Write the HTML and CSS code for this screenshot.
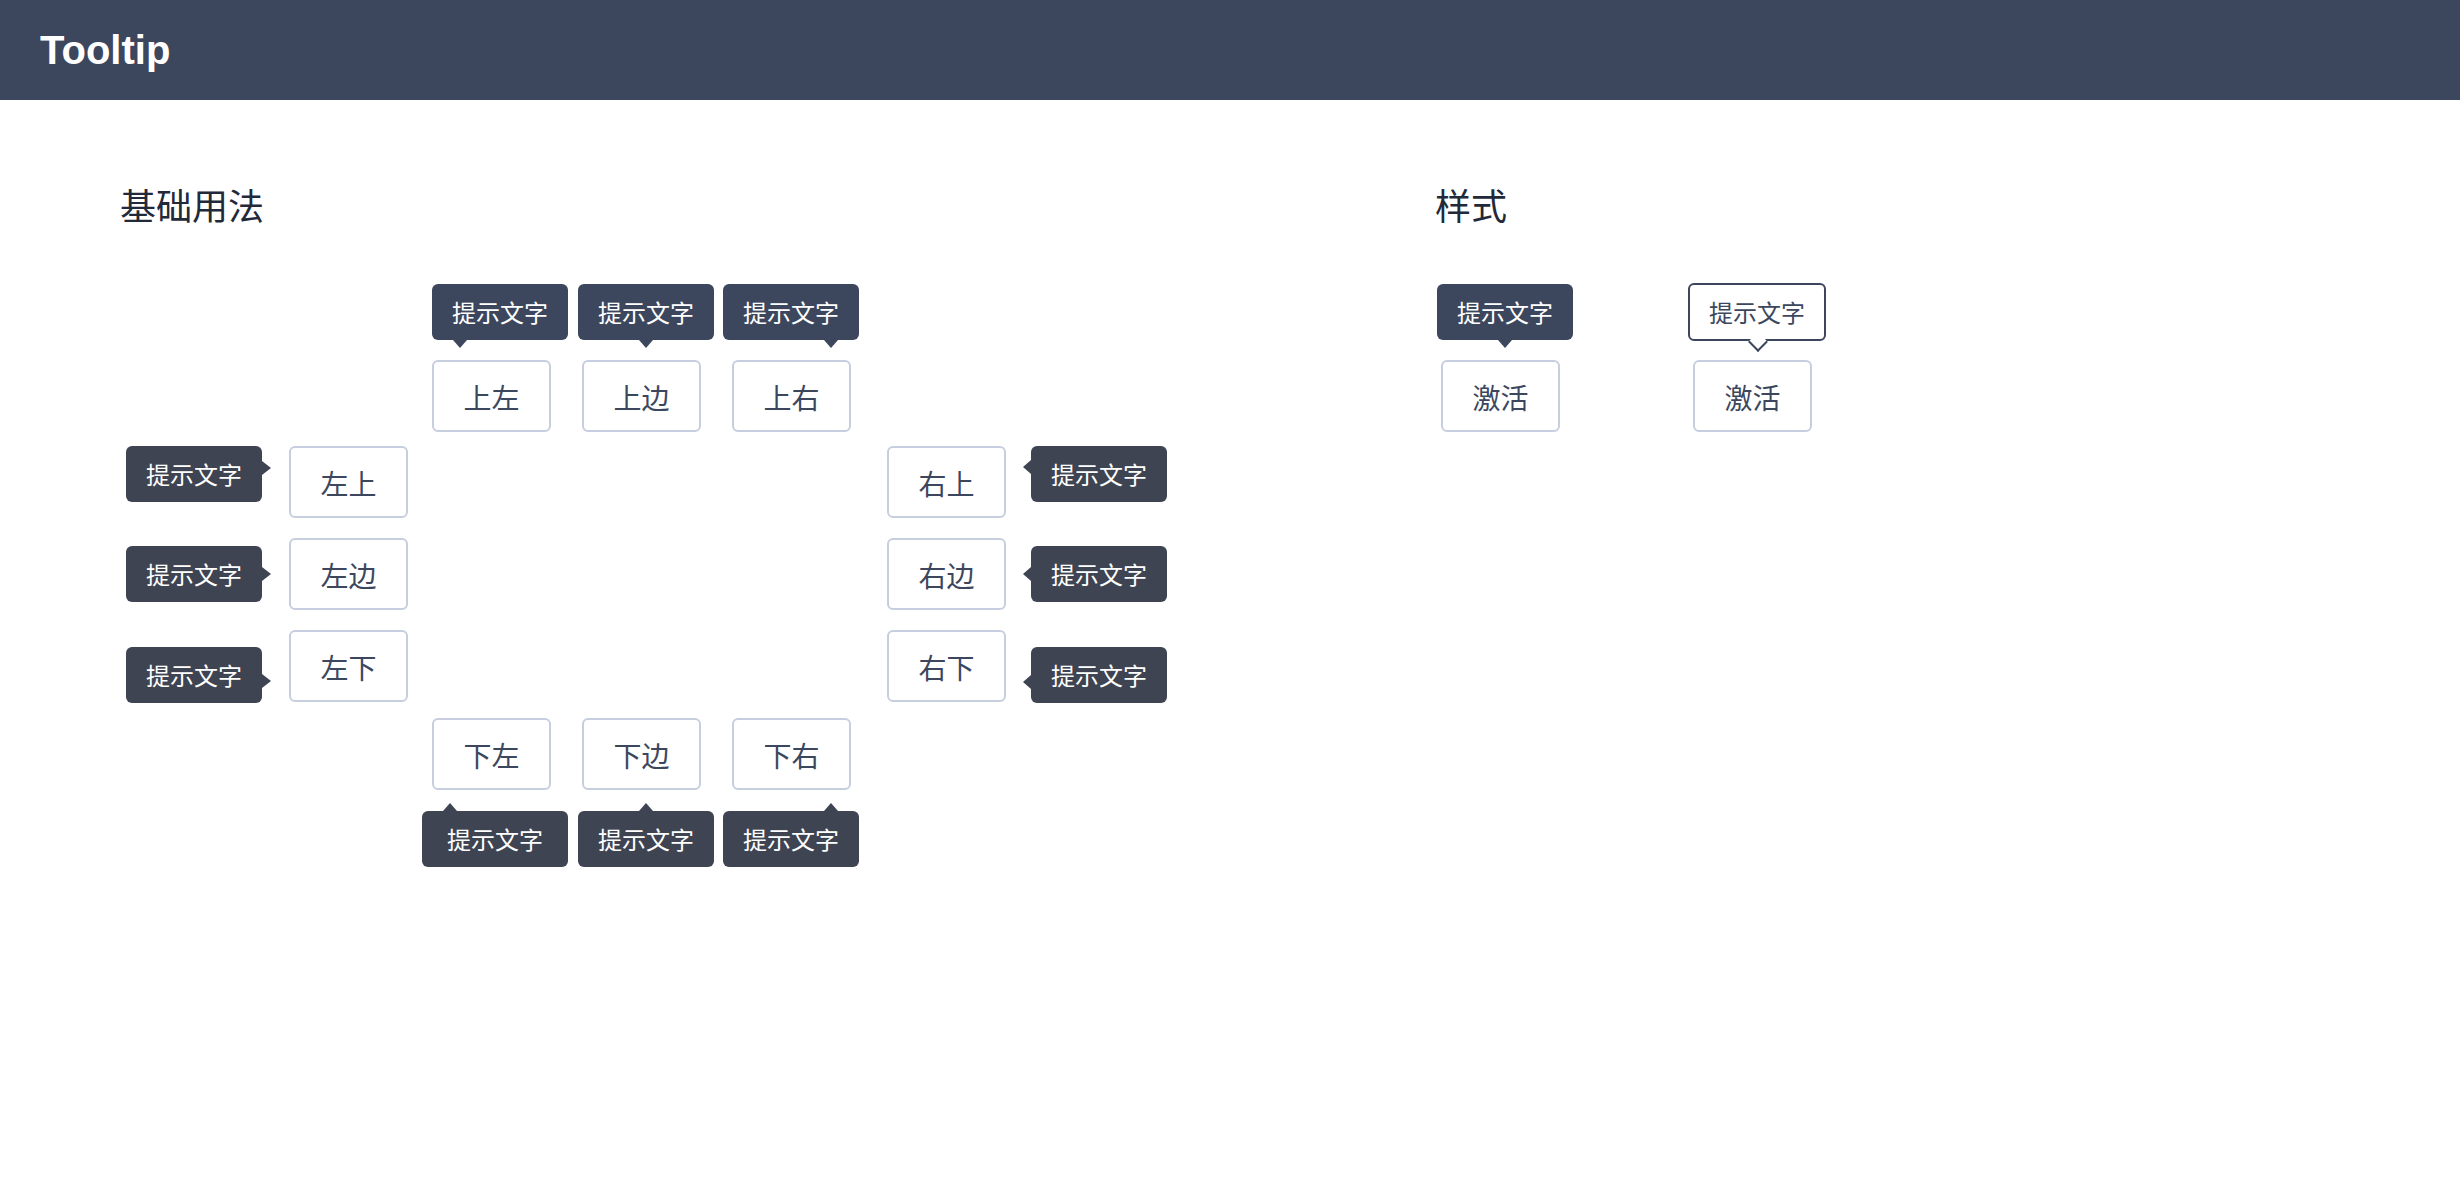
FILE: index.html
```html
<!DOCTYPE html>
<html lang="zh-CN">
<head>
<meta charset="utf-8">
<title>Tooltip</title>
<link rel="stylesheet" href="styles.css">
</head>
<body>
<header class="header"><h1 class="header-title">Tooltip</h1></header>
<main class="page">
  <section class="sec sec-basic">
    <h2 class="sec-title">基础用法</h2>
    <div class="placement">
      <div class="anchor r1 c2"><button class="btn">上左</button><div class="tip tip-top tip-start">提示文字</div></div>
      <div class="anchor r1 c3"><button class="btn">上边</button><div class="tip tip-top tip-center">提示文字</div></div>
      <div class="anchor r1 c4"><button class="btn">上右</button><div class="tip tip-top tip-end">提示文字</div></div>

      <div class="anchor r2 c1"><button class="btn">左上</button><div class="tip tip-left tip-start">提示文字</div></div>
      <div class="anchor r2 c5"><button class="btn">右上</button><div class="tip tip-right tip-start">提示文字</div></div>
      <div class="anchor r3 c1"><button class="btn">左边</button><div class="tip tip-left tip-center">提示文字</div></div>
      <div class="anchor r3 c5"><button class="btn">右边</button><div class="tip tip-right tip-center">提示文字</div></div>
      <div class="anchor r4 c1"><button class="btn">左下</button><div class="tip tip-left tip-end">提示文字</div></div>
      <div class="anchor r4 c5"><button class="btn">右下</button><div class="tip tip-right tip-end">提示文字</div></div>

      <div class="anchor r5 c2"><button class="btn">下左</button><div class="tip tip-bottom tip-start tip-wide">提示文字</div></div>
      <div class="anchor r5 c3"><button class="btn">下边</button><div class="tip tip-bottom tip-center">提示文字</div></div>
      <div class="anchor r5 c4"><button class="btn">下右</button><div class="tip tip-bottom tip-end">提示文字</div></div>
    </div>
  </section>
  <section class="sec sec-style">
    <h2 class="sec-title">样式</h2>
    <div class="style-row">
      <div class="anchor"><button class="btn">激活</button><div class="tip tip-top tip-center">提示文字</div></div>
      <div class="anchor"><button class="btn">激活</button><div class="tip tip-light">提示文字</div></div>
    </div>
  </section>
</main>
</body>
</html>
```
FILE: styles.css
```css
* { box-sizing: border-box; }

html, body { background: #ffffff; }

body {
  margin: 0;
  min-height: 100vh;
  font-family: "Noto Sans CJK SC", "Noto Sans", sans-serif;
}

.header {
  height: 100px;
  background: #3c475e;
  padding-left: 40px;
}

.header-title {
  margin: 0;
  font: bold 40px/100px "Liberation Sans", Arial, sans-serif;
  color: #ffffff;
}

.page {
  display: flex;
  padding: 86px 0 200px 120px;
}

.sec-basic { width: 1315px; }

.sec-title {
  margin: 0;
  font-size: 36px;
  line-height: 36px;
  font-weight: 400;
  color: #222938;
}

.placement {
  display: grid;
  grid-template-columns: 143px 150px 150px 155px 120px;
  grid-template-rows: 86px 92px 92px 88px 72px;
  margin: 138px 0 0 169px;
  padding-bottom: 100px;
}

.r1 { grid-row: 1; }
.r2 { grid-row: 2; }
.r3 { grid-row: 3; }
.r4 { grid-row: 4; }
.r5 { grid-row: 5; }
.c1 { grid-column: 1; }
.c2 { grid-column: 2; }
.c3 { grid-column: 3; }
.c4 { grid-column: 4; }
.c5 { grid-column: 5; }

.anchor {
  position: relative;
  width: 119px;
  height: 72px;
}

.btn {
  display: block;
  width: 100%;
  height: 100%;
  padding: 2px 0 0;
  border: 2px solid #c6cedf;
  border-radius: 6px;
  background: #ffffff;
  color: #3c475e;
  font-family: "Noto Sans CJK SC", "Noto Sans", sans-serif;
  font-size: 28px;
  line-height: 1;
}

.tip {
  --tip-bg: #3e4452;
  position: absolute;
  z-index: 2;
  height: 56px;
  padding: 0 20px;
  line-height: 56px;
  font-size: 24px;
  color: #ffffff;
  background: var(--tip-bg);
  border-radius: 6px;
  white-space: nowrap;
}

.tip::after {
  content: "";
  position: absolute;
  width: 0;
  height: 0;
  border-style: solid;
  border-color: transparent;
}

/* top */
.tip-top { --tip-bg: #3c475e; bottom: calc(100% + 20px); }
.tip-top::after { top: 100%; border-width: 8px 7px 0 7px; border-top-color: var(--tip-bg); }
.tip-top.tip-start { left: 0; }
.tip-top.tip-start::after { left: 21px; }
.tip-top.tip-center { left: -4px; }
.tip-top.tip-center::after { left: 50%; margin-left: -7px; }
.tip-top.tip-end { right: -8px; }
.tip-top.tip-end::after { right: 21px; }

/* bottom */
.tip-bottom { top: 93px; }
.tip-bottom::after { bottom: 100%; border-width: 0 7px 8px 7px; border-bottom-color: var(--tip-bg); }
.tip-bottom.tip-start { left: -10px; }
.tip-bottom.tip-start::after { left: 21px; }
.tip-bottom.tip-center { left: -4px; }
.tip-bottom.tip-center::after { left: 50%; margin-left: -7px; }
.tip-bottom.tip-end { right: -8px; }
.tip-bottom.tip-end::after { right: 21px; }
.tip-wide { padding: 0 25px; }

/* left */
.tip-left { right: calc(100% + 27px); }
.tip-left::after { left: 100%; border-width: 7px 0 7px 9px; border-left-color: var(--tip-bg); }
.tip-left.tip-start { top: 0; }
.tip-left.tip-start::after { top: 15px; }
.tip-left.tip-center { top: 8px; }
.tip-left.tip-center::after { top: 50%; margin-top: -7px; }
.tip-left.tip-end { bottom: -1px; }
.tip-left.tip-end::after { bottom: 15px; }

/* right */
.tip-right { left: calc(100% + 25px); }
.tip-right::after { right: 100%; border-width: 7px 8px 7px 0; border-right-color: var(--tip-bg); }
.tip-right.tip-start { top: 0; }
.tip-right.tip-start::after { top: 14px; }
.tip-right.tip-center { top: 8px; }
.tip-right.tip-center::after { top: 50%; margin-top: -7px; }
.tip-right.tip-end { bottom: -1px; }
.tip-right.tip-end::after { bottom: 14px; }

/* light style */
.style-row {
  display: flex;
  gap: 133px;
  margin: 138px 0 0 6px;
}

.tip-light {
  height: 58px;
  padding: 0 19px;
  line-height: 54px;
  background: #ffffff;
  color: #3c475e;
  border: 2px solid #3c475e;
  bottom: calc(100% + 19px);
  left: -5px;
}

.tip-light::after {
  width: 12px;
  height: 12px;
  left: 50%;
  margin-left: -6px;
  top: calc(100% - 4.5px);
  background: #ffffff;
  border-style: solid;
  border-color: #3c475e;
  border-width: 0 2px 2px 0;
  transform: rotate(45deg);
}
```
